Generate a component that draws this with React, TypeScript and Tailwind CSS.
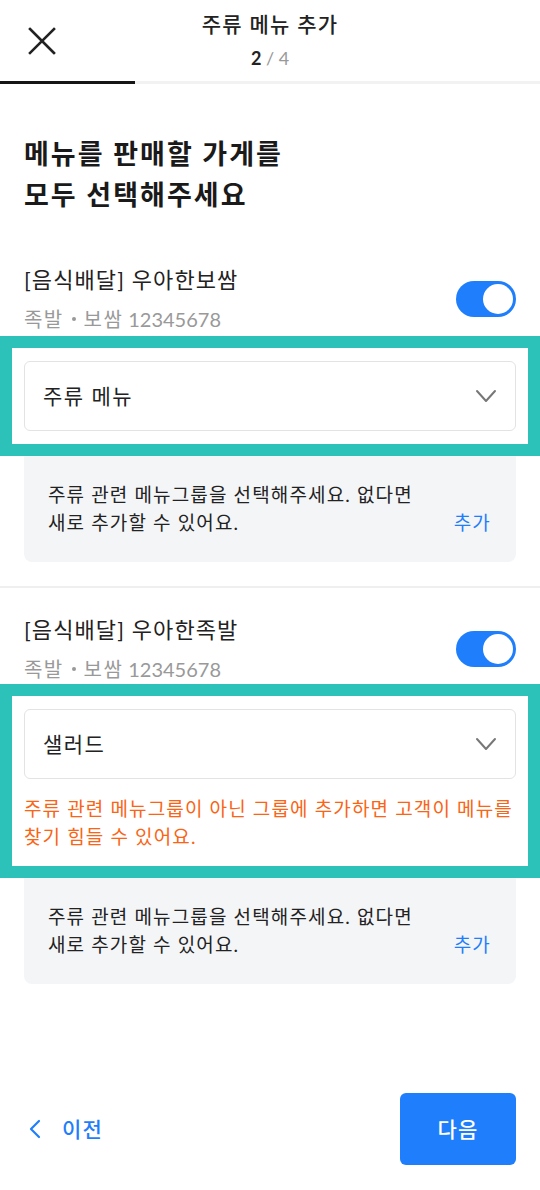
import React from "react";

function Toggle() {
  return (
    <div className="w-[60px] h-[36px] rounded-full bg-[#1f7efb] flex items-center justify-end pr-[3px] shrink-0">
      <div className="w-[30px] h-[30px] rounded-full bg-white" />
    </div>
  );
}

function Chevron() {
  return (
    <svg width="22" height="14" viewBox="0 0 22 14" fill="none">
      <path d="M2 2 L11 12 L20 2" stroke="#777" strokeWidth="2" strokeLinecap="round" strokeLinejoin="round" />
    </svg>
  );
}

function Select({ label }: { label: string }) {
  return (
    <div className="h-[70px] border border-[#e3e3e3] rounded-[6px] flex items-center justify-between pl-[18px] pr-[18px]">
      <span className="text-[21px] tracking-[0.07em] text-[#222]">{label}</span>
      <Chevron />
    </div>
  );
}

function Store({ name }: { name: string }) {
  return (
    <div className="px-6 flex items-center justify-between">
      <div className="flex flex-col">
        <div className="text-[22px] leading-[32px] tracking-[0.05em] text-[#222]">{name}</div>
        <div className="text-[20px] leading-[30px] mt-[8px] text-[#999] flex items-center">
          <span className="tracking-[0.07em]">족발</span>
          <span className="mx-[8px] w-[4px] h-[4px] rounded-full bg-[#999]" />
          <span className="tracking-[0.07em]">보쌈</span>
          <span className="ml-[5px]">12345678</span>
        </div>
      </div>
      <Toggle />
    </div>
  );
}

function InfoBox() {
  return (
    <div className="mx-6 bg-[#f4f5f7] rounded-b-[8px] pl-6 pr-[25px] pt-[25px] pb-[25px] flex items-end justify-between">
      <div className="text-[19px] leading-[28px] tracking-[0.06em] text-[#222]">
        주류 관련 메뉴그룹을 선택해주세요. 없다면
        <br />
        새로 추가할 수 있어요.
      </div>
      <div className="text-[19px] leading-[28px] tracking-[0.06em] text-[#1f7efb]">추가</div>
    </div>
  );
}

export default function App() {
  return (
    <div className="w-[540px] h-[1190px] bg-white flex flex-col font-[Lato,'Noto_Sans_CJK_KR',sans-serif] overflow-hidden">
      {/* Header */}
      <div className="h-[81px] grid grid-cols-[100px_1fr_100px] items-center">
        <div className="pl-[28px] flex items-center">
          <svg width="28" height="28" viewBox="0 0 28 28" fill="none">
            <path d="M2 2 L26 26 M26 2 L2 26" stroke="#222" strokeWidth="2.6" strokeLinecap="square" />
          </svg>
        </div>
        <div className="flex flex-col items-center">
          <div className="text-[21px] leading-[30px] font-medium tracking-[0.06em] text-[#222] mt-[-2px]">주류 메뉴 추가</div>
          <div className="text-[18px] leading-[24px] mt-[7px] text-[#999]">
            <span className="font-bold text-[#222]">2</span> / 4
          </div>
        </div>
        <div />
      </div>
      <div className="h-[3px] flex">
        <div className="w-[135px] bg-[#151515]" />
        <div className="flex-1 bg-[#f2f2f2]" />
      </div>

      {/* Heading */}
      <div className="px-6 pt-[49px] text-[27px] leading-[41px] font-bold tracking-[0.075em] text-[#1a1a1a]">
        메뉴를 판매할 가게를
        <br />
        모두 선택해주세요
      </div>

      {/* Store 1 */}
      <div className="mt-[49px]">
        <Store name="[음식배달] 우아한보쌈" />
      </div>
      <div className="mt-[2px] border-[12px] border-[#2cc1b9] bg-white px-[12px] py-[13px]">
        <Select label="주류 메뉴" />
      </div>
      <InfoBox />

      <div className="mt-[24px] h-[2px] bg-[#efefef]" />

      {/* Store 2 */}
      <div className="mt-[26px]">
        <Store name="[음식배달] 우아한족발" />
      </div>
      <div className="border-[12px] border-[#2cc1b9] bg-white px-[12px] pt-[13px] pb-[15px]">
        <Select label="샐러드" />
        <div className="mt-[16px] text-[19px] leading-[28px] tracking-[0.06em] break-keep text-[#fa6414]">
          주류 관련 메뉴그룹이 아닌 그룹에 추가하면 고객이 메뉴를 찾기 힘들 수 있어요.
        </div>
      </div>
      <InfoBox />

      {/* Footer */}
      <div className="mt-auto px-6 pb-[25px] flex items-center justify-between">
        <div className="flex items-center pl-[4px]">
          <svg width="14" height="20" viewBox="0 0 14 20" fill="none">
            <path d="M11 2 L3 10 L11 18" stroke="#1f7efb" strokeWidth="2.2" strokeLinecap="round" strokeLinejoin="round" />
          </svg>
          <span className="ml-[20px] text-[21px] font-medium tracking-[0.06em] text-[#1f7efb]">이전</span>
        </div>
        <div className="w-[116px] h-[72px] rounded-[6px] bg-[#1f7efb] flex items-center justify-center text-[21px] font-medium tracking-[0.06em] text-white">
          다음
        </div>
      </div>
    </div>
  );
}
